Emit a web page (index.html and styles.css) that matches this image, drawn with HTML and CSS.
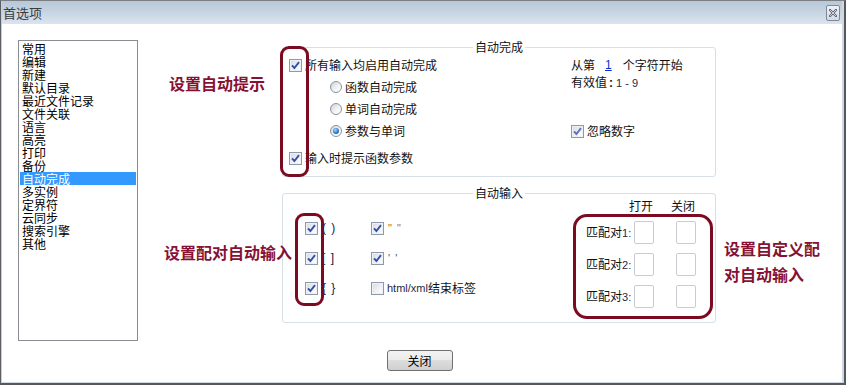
FILE: index.html
```html
<!DOCTYPE html>
<html lang="zh-CN">
<head>
<meta charset="utf-8">
<title>首选项</title>
<link rel="stylesheet" href="styles.css">
</head>
<body>
<div class="window">
  <div class="frame">
    <div class="titlebar">
      <span class="title">首选项</span>
      <span class="close-x">
        <svg width="8" height="8" viewBox="0 0 8 8"><path d="M1 1L7 7M7 1L1 7" stroke="#5d6470" stroke-width="2.2" stroke-linecap="square"/><path d="M1 1L7 7M7 1L1 7" stroke="#e9edf2" stroke-width="0.8"/></svg>
      </span>
    </div>
    <div class="body">
      <div class="main">
        <ul class="listbox">
          <li>常用</li>
          <li>编辑</li>
          <li>新建</li>
          <li>默认目录</li>
          <li>最近文件记录</li>
          <li>文件关联</li>
          <li>语言</li>
          <li>高亮</li>
          <li>打印</li>
          <li>备份</li>
          <li class="selected">自动完成</li>
          <li>多实例</li>
          <li>定界符</li>
          <li>云同步</li>
          <li>搜索引擎</li>
          <li>其他</li>
        </ul>
        <div class="panel">
          <fieldset class="group">
            <legend>自动完成</legend>
            <div class="grid-complete">
              <label class="opt"><span class="cb on"><svg viewBox="0 0 11 11"><path d="M2 5.3L4.4 8L9 2.2" /></svg></span>所有输入均启用自动完成</label>
              <div class="start">从第<span class="num">1</span>个字符开始</div>
              <label class="opt indent"><span class="rb"></span>函数自动完成</label>
              <div class="valid">有效值<span class="colon">:</span><span class="latin">1 - 9</span></div>
              <label class="opt indent"><span class="rb"></span>单词自动完成</label>
              <div></div>
              <label class="opt indent"><span class="rb on"></span>参数与单词</label>
              <label class="opt"><span class="cb on light"><svg viewBox="0 0 11 11"><path d="M2 5.3L4.4 8L9 2.2" /></svg></span>忽略数字</label>
              <label class="opt last"><span class="cb on"><svg viewBox="0 0 11 11"><path d="M2 5.3L4.4 8L9 2.2" /></svg></span>输入时提示函数参数</label>
            </div>
          </fieldset>
          <fieldset class="group second">
            <legend>自动输入</legend>
            <div class="input-wrap">
              <div class="pairs">
                <label class="opt"><span class="cb on"><svg viewBox="0 0 11 11"><path d="M2 5.3L4.4 8L9 2.2" /></svg></span><span class="br">( )</span></label>
                <label class="opt"><span class="cb on"><svg viewBox="0 0 11 11"><path d="M2 5.3L4.4 8L9 2.2" /></svg></span><span class="br dq">" "</span></label>
                <label class="opt"><span class="cb on"><svg viewBox="0 0 11 11"><path d="M2 5.3L4.4 8L9 2.2" /></svg></span><span class="br">[ ]</span></label>
                <label class="opt"><span class="cb on"><svg viewBox="0 0 11 11"><path d="M2 5.3L4.4 8L9 2.2" /></svg></span><span class="br sq">' '</span></label>
                <label class="opt"><span class="cb on"><svg viewBox="0 0 11 11"><path d="M2 5.3L4.4 8L9 2.2" /></svg></span><span class="br">{ }</span></label>
                <label class="opt"><span class="cb"></span><span class="latin">html/xml</span>结束标签</label>
              </div>
              <div class="custom">
                <span></span><span class="head">打开</span><span class="head h2">关闭</span>
                <span class="plabel">匹配对<span class="latin">1:</span></span><span class="box"></span><span class="box b2"></span>
                <span class="plabel">匹配对<span class="latin">2:</span></span><span class="box"></span><span class="box b2"></span>
                <span class="plabel">匹配对<span class="latin">3:</span></span><span class="box"></span><span class="box b2"></span>
              </div>
            </div>
          </fieldset>
        </div>
      </div>
      <div class="footer">
        <button class="btn">关闭</button>
      </div>

      <div class="mark mark-1"></div>
      <div class="mark mark-2"></div>
      <div class="mark mark-3"></div>
      <div class="note note-1">设置自动提示</div>
      <div class="note note-2">设置配对自动输入</div>
      <div class="note note-3">设置自定义配<br>对自动输入</div>
    </div>
  </div>
</div>
</body>
</html>
```
FILE: styles.css
```css
* { box-sizing: border-box; }

html, body {
  margin: 0;
  padding: 0;
  background: #ffffff;
}

body {
  font-family: "Noto Sans CJK SC", "Noto Sans", sans-serif;
  font-size: 12px;
  color: #111;
}

.window {
  width: 846px;
  height: 385px;
  border-top: 1px solid #7c7f84;
  border-left: 1px solid #5b5e63;
  border-right: 2px solid #55585d;
  border-bottom: 2px solid #55585d;
}

.frame {
  height: 100%;
  border-left: 1px solid #c6d0dc;
  border-right: 2px solid #cfd8e3;
  border-bottom: 1px solid #cfd8e3;
  display: flex;
  flex-direction: column;
}

.titlebar {
  height: 23px;
  flex: none;
  display: flex;
  align-items: center;
  justify-content: space-between;
  padding: 0 2px 0 1px;
  background: linear-gradient(#b8c8d8, #c9d6e3 55%, #dae5f0);
}

.title {
  font-size: 13px;
  color: #3b3b3b;
  line-height: 16px;
}

.close-x {
  width: 14px;
  height: 16px;
  margin-top: 1px;
  border: 1px solid #7f8999;
  border-radius: 2px;
  background: linear-gradient(#eef2f7, #d2dbe6);
  display: flex;
  align-items: center;
  justify-content: center;
}

.close-x svg { display: block; }

.body {
  position: relative;
  flex: 1;
  background: #fff;
}

.main {
  display: flex;
  padding: 16px 0 0 16px;
}

.listbox {
  list-style: none;
  margin: 0;
  width: 120px;
  height: 301px;
  padding: 1px;
  border: 1px solid #8a8d92;
}

.listbox li {
  line-height: 13px;
  height: 13px;
  padding-left: 2px;
  color: #000;
  white-space: nowrap;
}

.listbox li.selected {
  background: #3399ff;
  color: #fff;
}

.panel {
  margin-left: 144px;
  width: 434px;
}

.group {
  margin: 0;
  padding: 0;
  height: 137px;
  border: 1px solid #d6dee6;
  border-radius: 3px;
  min-width: 0;
}

.group.second {
  margin-top: 9px;
}

.group legend {
  margin: 0 auto;
  padding: 0 2px;
  line-height: 14px;
  color: #111;
}

.opt {
  display: flex;
  align-items: center;
  white-space: nowrap;
  line-height: 14px;
}

.cb {
  width: 13px;
  height: 13px;
  flex: none;
  margin-right: 3px;
  border: 1px solid #8e99ab;
  background: linear-gradient(135deg, #d5d8dd, #f2f3f5 60%, #ffffff);
  box-shadow: inset 0 0 0 1px #eef0f3;
  display: flex;
  align-items: center;
  justify-content: center;
}

.cb svg {
  width: 11px;
  height: 11px;
  fill: none;
  stroke: #2f52a8;
  stroke-width: 1.9;
}

.cb.light svg { stroke: #5a74b8; }

.rb {
  width: 12px;
  height: 12px;
  flex: none;
  margin-right: 3px;
  border: 1px solid #8c939e;
  border-radius: 50%;
  background: linear-gradient(135deg, #cfd3d8, #f4f5f7 60%, #ffffff);
  position: relative;
}

.rb.on::after {
  content: "";
  position: absolute;
  left: 2px;
  top: 2px;
  width: 6px;
  height: 6px;
  border-radius: 50%;
  background: radial-gradient(circle at 40% 35%, #a8dcff, #2b78cc 55%, #123f7a);
}

.grid-complete {
  display: grid;
  grid-template-columns: 282px auto;
  grid-template-rows: 22px 22px 22px 22px;
  padding-left: 6px;
}

.grid-complete .indent {
  padding-left: 41px;
}

.grid-complete .last {
  margin-top: 5px;
  height: 22px;
}

.start {
  display: flex;
  align-items: center;
  line-height: 14px;
}

.num {
  color: #0b2fd0;
  text-decoration: underline;
  font-family: "Liberation Sans", sans-serif;
  margin: 0 11px 0 10px;
}

.valid {
  align-self: start;
  margin-top: -1px;
  line-height: 14px;
}

.colon {
  font-family: "Liberation Sans", sans-serif;
  font-weight: bold;
  margin: 0 3px 0 2px;
}

.latin {
  font-family: "Liberation Sans", sans-serif;
  font-size: 11px;
  color: #1f2a44;
}

.input-wrap {
  display: flex;
  justify-content: space-between;
  padding-right: 19px;
}

.pairs {
  display: grid;
  grid-template-columns: 66px auto;
  grid-template-rows: 30px 30px 30px;
  margin-left: 22px;
  padding-top: 13px;
}

.br {
  font-family: "Liberation Sans", sans-serif;
  font-size: 12px;
  color: #14213d;
  letter-spacing: 1px;
  margin-left: 1px;
}

.br.dq { color: #b0701a; font-size: 11px; }
.br.sq { color: #555; font-size: 11px; }

.custom {
  display: grid;
  grid-template-columns: 48px 20px 42px;
  grid-template-rows: 12px 23px 23px 23px;
  row-gap: 9px;
}

.head {
  justify-self: center;
  margin-right: 6px;
  line-height: 12px;
  white-space: nowrap;
}

.head.h2 {
  justify-self: end;
  margin-right: 1px;
}

.plabel {
  align-self: center;
  white-space: nowrap;
  line-height: 14px;
}

.plabel .latin { font-size: 11px; }

.box {
  width: 20px;
  border: 1px solid #c9cdd3;
  border-radius: 2px;
  background: #fff;
}

.box.b2 { justify-self: end; }

.footer {
  display: flex;
  justify-content: center;
  margin-top: 9px;
  padding-right: 5px;
}

.btn {
  width: 66px;
  height: 21px;
  padding: 0;
  border: 1px solid #707070;
  border-radius: 3px;
  background: linear-gradient(#f2f2f2, #ebebeb 45%, #dddddd 50%, #cfcfcf);
  font-family: "Noto Sans CJK SC", sans-serif;
  font-size: 12px;
  color: #000;
  line-height: 18px;
}

/* red annotations drawn over the dialog */
.mark {
  position: absolute;
  border: 3px solid #7a0b20;
  border-radius: 9px;
}

.mark-1 { left: 278px; top: 22px; width: 29px; height: 131px; }
.mark-2 { left: 293px; top: 189px; width: 29px; height: 93px; }
.mark-3 { left: 571px; top: 190px; width: 140px; height: 105px; border-radius: 14px; }

.note {
  position: absolute;
  font-size: 16px;
  font-weight: bold;
  color: #861132;
  line-height: 20px;
  white-space: nowrap;
}

.note-1 { left: 167px; top: 49px; }
.note-2 { left: 162px; top: 218px; }
.note-3 { left: 722px; top: 211px; line-height: 26px; }
```
